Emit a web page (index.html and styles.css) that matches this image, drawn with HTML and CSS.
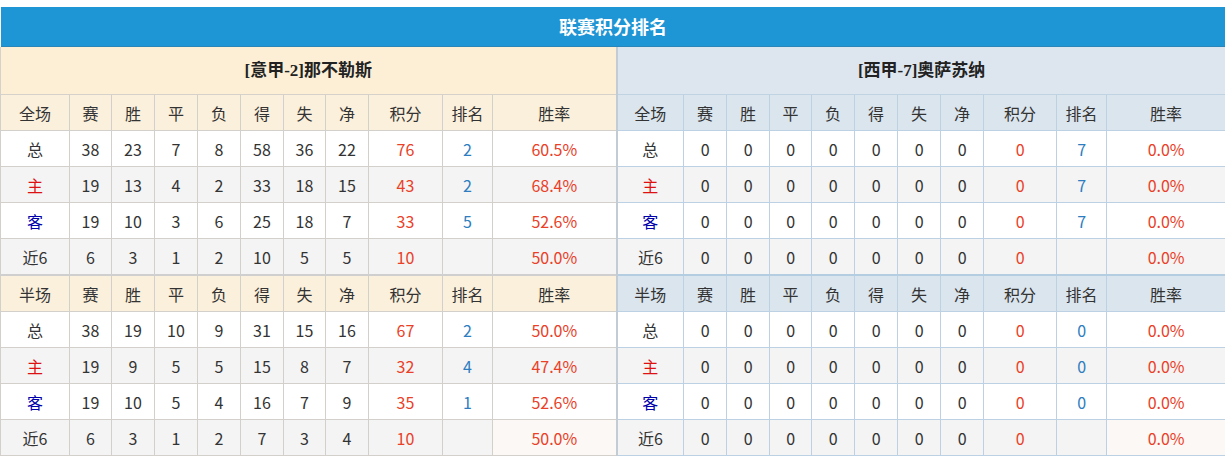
FILE: index.html
```html
<!DOCTYPE html>
<html lang="zh">
<head>
<meta charset="utf-8">
<title>联赛积分排名</title>
<link rel="stylesheet" href="styles.css">
</head>
<body>
<div class="wrap">
  <div class="title">联赛积分排名</div>
  <table class="standings">
    <colgroup>
      <col class="w69"><col class="w42"><col class="w43"><col class="w43"><col class="w43"><col class="w43"><col class="w42"><col class="w43"><col class="w74"><col class="w50"><col class="w124">
      <col class="w67"><col class="w43"><col class="w43"><col class="w42"><col class="w43"><col class="w43"><col class="w43"><col class="w43"><col class="w73"><col class="w50"><col class="w119">
    </colgroup>
    <tr class="team-row">
      <td colspan="11" class="home team">[意甲-2]那不勒斯</td>
      <td colspan="11" class="away team split">[西甲-7]奥萨苏纳</td>
    </tr>
    <tr class="head-row">
      <td class="h">全场</td><td class="h">赛</td><td class="h">胜</td><td class="h">平</td><td class="h">负</td><td class="h">得</td><td class="h">失</td><td class="h">净</td><td class="h">积分</td><td class="h">排名</td><td class="h">胜率</td>
      <td class="a split">全场</td><td class="a">赛</td><td class="a">胜</td><td class="a">平</td><td class="a">负</td><td class="a">得</td><td class="a">失</td><td class="a">净</td><td class="a">积分</td><td class="a">排名</td><td class="a">胜率</td>
    </tr>
    <tr class="row">
      <td class="h">总</td><td class="h">38</td><td class="h">23</td><td class="h">7</td><td class="h">8</td><td class="h">58</td><td class="h">36</td><td class="h">22</td><td class="h pts">76</td><td class="h rk">2</td><td class="h pct">60.5%</td>
      <td class="a split">总</td><td class="a">0</td><td class="a">0</td><td class="a">0</td><td class="a">0</td><td class="a">0</td><td class="a">0</td><td class="a">0</td><td class="a pts">0</td><td class="a rk">7</td><td class="a pct">0.0%</td>
    </tr>
    <tr class="row alt">
      <td class="h zhu">主</td><td class="h">19</td><td class="h">13</td><td class="h">4</td><td class="h">2</td><td class="h">33</td><td class="h">18</td><td class="h">15</td><td class="h pts">43</td><td class="h rk">2</td><td class="h pct">68.4%</td>
      <td class="a split zhu">主</td><td class="a">0</td><td class="a">0</td><td class="a">0</td><td class="a">0</td><td class="a">0</td><td class="a">0</td><td class="a">0</td><td class="a pts">0</td><td class="a rk">7</td><td class="a pct">0.0%</td>
    </tr>
    <tr class="row">
      <td class="h ke">客</td><td class="h">19</td><td class="h">10</td><td class="h">3</td><td class="h">6</td><td class="h">25</td><td class="h">18</td><td class="h">7</td><td class="h pts">33</td><td class="h rk">5</td><td class="h pct">52.6%</td>
      <td class="a split ke">客</td><td class="a">0</td><td class="a">0</td><td class="a">0</td><td class="a">0</td><td class="a">0</td><td class="a">0</td><td class="a">0</td><td class="a pts">0</td><td class="a rk">7</td><td class="a pct">0.0%</td>
    </tr>
    <tr class="row alt">
      <td class="h">近6</td><td class="h">6</td><td class="h">3</td><td class="h">1</td><td class="h">2</td><td class="h">10</td><td class="h">5</td><td class="h">5</td><td class="h pts">10</td><td class="h rk"></td><td class="h pct">50.0%</td>
      <td class="a split">近6</td><td class="a">0</td><td class="a">0</td><td class="a">0</td><td class="a">0</td><td class="a">0</td><td class="a">0</td><td class="a">0</td><td class="a pts">0</td><td class="a rk"></td><td class="a pct">0.0%</td>
    </tr>
    <tr class="head-row half">
      <td class="h">半场</td><td class="h">赛</td><td class="h">胜</td><td class="h">平</td><td class="h">负</td><td class="h">得</td><td class="h">失</td><td class="h">净</td><td class="h">积分</td><td class="h">排名</td><td class="h">胜率</td>
      <td class="a split">半场</td><td class="a">赛</td><td class="a">胜</td><td class="a">平</td><td class="a">负</td><td class="a">得</td><td class="a">失</td><td class="a">净</td><td class="a">积分</td><td class="a">排名</td><td class="a">胜率</td>
    </tr>
    <tr class="row">
      <td class="h">总</td><td class="h">38</td><td class="h">19</td><td class="h">10</td><td class="h">9</td><td class="h">31</td><td class="h">15</td><td class="h">16</td><td class="h pts">67</td><td class="h rk">2</td><td class="h pct">50.0%</td>
      <td class="a split">总</td><td class="a">0</td><td class="a">0</td><td class="a">0</td><td class="a">0</td><td class="a">0</td><td class="a">0</td><td class="a">0</td><td class="a pts">0</td><td class="a rk">0</td><td class="a pct">0.0%</td>
    </tr>
    <tr class="row alt">
      <td class="h zhu">主</td><td class="h">19</td><td class="h">9</td><td class="h">5</td><td class="h">5</td><td class="h">15</td><td class="h">8</td><td class="h">7</td><td class="h pts">32</td><td class="h rk">4</td><td class="h pct">47.4%</td>
      <td class="a split zhu">主</td><td class="a">0</td><td class="a">0</td><td class="a">0</td><td class="a">0</td><td class="a">0</td><td class="a">0</td><td class="a">0</td><td class="a pts">0</td><td class="a rk">0</td><td class="a pct">0.0%</td>
    </tr>
    <tr class="row">
      <td class="h ke">客</td><td class="h">19</td><td class="h">10</td><td class="h">5</td><td class="h">4</td><td class="h">16</td><td class="h">7</td><td class="h">9</td><td class="h pts">35</td><td class="h rk">1</td><td class="h pct">52.6%</td>
      <td class="a split ke">客</td><td class="a">0</td><td class="a">0</td><td class="a">0</td><td class="a">0</td><td class="a">0</td><td class="a">0</td><td class="a">0</td><td class="a pts">0</td><td class="a rk">0</td><td class="a pct">0.0%</td>
    </tr>
    <tr class="row alt">
      <td class="h">近6</td><td class="h">6</td><td class="h">3</td><td class="h">1</td><td class="h">2</td><td class="h">7</td><td class="h">3</td><td class="h">4</td><td class="h pts">10</td><td class="h rk"></td><td class="h pct hl">50.0%</td>
      <td class="a split">近6</td><td class="a">0</td><td class="a">0</td><td class="a">0</td><td class="a">0</td><td class="a">0</td><td class="a">0</td><td class="a">0</td><td class="a pts">0</td><td class="a rk"></td><td class="a pct hl">0.0%</td>
    </tr>
  </table>
</div>
</body>
</html>
```

FILE: styles.css
```css
html, body {
  margin: 0;
  padding: 0;
  background: #ffffff;
}
body {
  padding-top: 7px;
  font-family: "Noto Sans CJK SC", "Noto Sans", sans-serif;
  font-size: 16px;
  color: #333333;
}
.wrap {
  width: 1225px;
}
.title {
  height: 39px;
  margin-left: 1px;
  background: #1e95d4;
  border-bottom: 1px solid #2a86b8;
  color: #ffffff;
  font-size: 18px;
  font-weight: bold;
  line-height: 39px;
  text-align: center;
}
.standings {
  width: 1225px;
  table-layout: fixed;
  border-collapse: collapse;
}
.w42 { width: 42px; }
.w43 { width: 43px; }
.w50 { width: 50px; }
.w67 { width: 67px; }
.w69 { width: 69px; }
.w73 { width: 73px; }
.w74 { width: 74px; }
.w119 { width: 119px; }
.w124 { width: 124px; }
.standings td {
  padding: 0;
  text-align: center;
  vertical-align: middle;
  line-height: 20px;
  white-space: nowrap;
}
.team-row td {
  height: 47px;
  font-family: "Liberation Serif", "Noto Sans CJK SC", serif;
  font-weight: bold;
  font-size: 17px;
  color: #222222;
}
.team.home {
  background: #fcefd6;
  border: 1px solid #d6d2cb;
  border-top: none;
}
.team.away {
  background: #dde6ee;
  border-bottom: 1px solid #bfd3e3;
}
.head-row td, .row td {
  height: 35px;
}
td.h {
  border: 1px solid #d3d0cc;
}
td.a {
  border: 1px solid #bcd2e4;
}
.head-row td.h {
  background: #fbf0dc;
}
.head-row td.a {
  background: #dbe5ee;
}
.row td {
  background: #ffffff;
}
.row.alt td {
  background: #f4f4f4;
}
.row td.hl {
  background: #fcf8f5;
}
.half td.h {
  border-top: 2px solid #cfcfcf;
}
.half td.a {
  border-top: 2px solid #b5cde0;
}
td.split {
  border-left: 2px solid #c3ccd5;
}
td.zhu { color: #dd1111; }
td.ke { color: #0000aa; }
td.pts, td.pct { color: #ea4027; }
td.rk { color: #2d7dc0; }
```
